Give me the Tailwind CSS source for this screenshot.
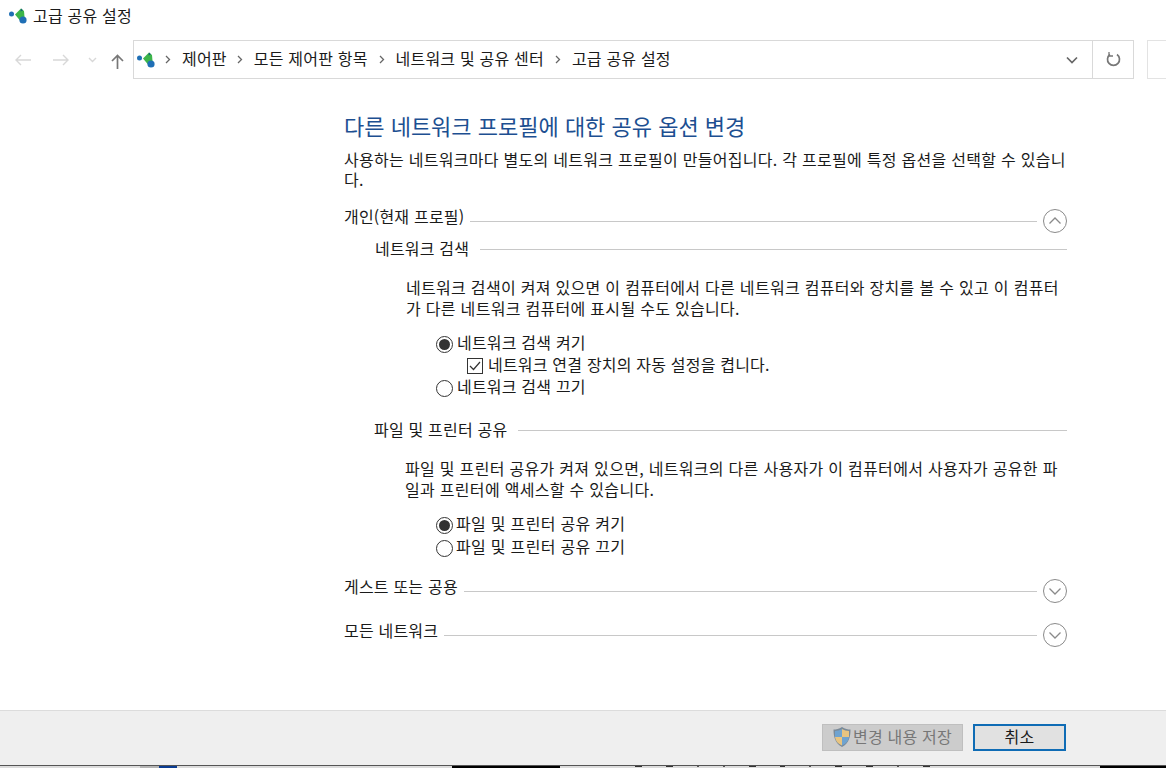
<!DOCTYPE html>
<html lang="ko">
<head>
<meta charset="utf-8" />
<title>고급 공유 설정</title>
<script src="https://cdn.jsdelivr.net/npm/@tailwindcss/browser@4"></script>
</head>
<body class="bg-white w-[1166px] h-[768px] overflow-hidden flex flex-col text-[16px] tracking-[0.2px] text-[#1a1a1a] font-['Noto_Sans_CJK_KR','Noto_Sans',sans-serif]">
  <!-- title bar -->
  <div class="h-[40px] shrink-0 flex items-center pl-[9px] pb-[8px] gap-[6px]">
    <svg width="18" height="16" viewBox="0 0 18 16"><circle cx="2.500" cy="6" r="2.500" fill="#1f6fb5"/><path d="M12 0.500 L15 3 L15.500 9 L11 12.500 L6 6.500 Z" fill="#3cb54a"/><path d="M12 0.500L14 2.200L11.500 3.500Z" fill="#14607a"/><circle cx="14" cy="12" r="3.600" fill="#1f6fb5"/></svg>
    <span class="pb-[2px]">고급 공유 설정</span>
  </div>
  <!-- nav bar -->
  <div class="h-[39px] shrink-0 flex items-stretch">
    <div class="w-[133px] flex items-center">
      <svg class="ml-[15px]" width="16" height="12" viewBox="0 0 16 12" fill="none" stroke="#d8d8d8" stroke-width="1.400"><path d="M16 6H1M6 1L1 6L6 11"/></svg>
      <svg class="ml-[22px]" width="16" height="12" viewBox="0 0 16 12" fill="none" stroke="#d8d8d8" stroke-width="1.400"><path d="M0 6H15M10 1L15 6L10 11"/></svg>
      <svg class="ml-[19px]" width="9" height="6" viewBox="0 0 9 6" fill="none" stroke="#d8d8d8" stroke-width="1.400"><path d="M1 1L4.500 4.500L8 1"/></svg>
      <svg class="ml-[14px] mt-[3px]" width="13" height="15" viewBox="0 0 13 15" fill="none" stroke="#777" stroke-width="1.700"><path d="M6.500 15V1.500M1 7L6.500 1.500L12 7"/></svg>
    </div>
    <div class="w-[1001px] border border-[#d9d9d9] flex items-center">
      <svg class="ml-[3px]" width="18" height="16" viewBox="0 0 18 16"><circle cx="2.500" cy="6" r="2.500" fill="#1f6fb5"/><path d="M12 0.500 L15 3 L15.500 9 L11 12.500 L6 6.500 Z" fill="#3cb54a"/><path d="M12 0.500L14 2.200L11.500 3.500Z" fill="#14607a"/><circle cx="14" cy="12" r="3.600" fill="#1f6fb5"/></svg>
      <svg class="ml-[10px]" width="6" height="9" viewBox="0 0 6 9" fill="none" stroke="#666" stroke-width="1.300"><path d="M1 1L4.500 4.500L1 8"/></svg>
      <span class="ml-[11px] pb-[4px]">제어판</span>
      <svg class="ml-[10px]" width="6" height="9" viewBox="0 0 6 9" fill="none" stroke="#666" stroke-width="1.300"><path d="M1 1L4.500 4.500L1 8"/></svg>
      <span class="ml-[11px] pb-[4px]">모든 제어판 항목</span>
      <svg class="ml-[11px]" width="6" height="9" viewBox="0 0 6 9" fill="none" stroke="#666" stroke-width="1.300"><path d="M1 1L4.500 4.500L1 8"/></svg>
      <span class="ml-[11px] pb-[4px]">네트워크 및 공유 센터</span>
      <svg class="ml-[11px]" width="6" height="9" viewBox="0 0 6 9" fill="none" stroke="#666" stroke-width="1.300"><path d="M1 1L4.500 4.500L1 8"/></svg>
      <span class="ml-[11px] pb-[4px]">고급 공유 설정</span>
      <svg class="ml-auto mr-[14px]" width="12" height="8" viewBox="0 0 12 8" fill="none" stroke="#666" stroke-width="1.700"><path d="M1 1.500L6 6.500L11 1.500"/></svg>
      <div class="w-[41px] h-full border-l border-[#d9d9d9] flex items-center justify-center pl-[1px]">
        <svg width="15" height="15" viewBox="0 0 15 15" fill="none" stroke="#777" stroke-width="1.700"><path d="M4 2.500A6 6 0 1 0 11 2.500"/><path d="M3 0V4H7" stroke-width="1.300"/></svg>
      </div>
    </div>
    <div class="ml-[13px] flex-1 border border-r-0 border-[#e3e3e3]"></div>
  </div>
  <!-- content -->
  <main class="flex-1 pl-[344px] w-[1067px]">
    <h1 class="mt-[33px] text-[22px] leading-[26px] tracking-normal text-[#1d4f91]">다른 네트워크 프로필에 대한 공유 옵션 변경</h1>
    <p class="mt-[11px] leading-[20px] tracking-[0.28px]">사용하는 네트워크마다 별도의 네트워크 프로필이 만들어집니다. 각 프로필에 특정 옵션을 선택할 수 있습니다.</p>
    <div class="mt-[17px] flex items-center h-[30px]">
      <span class="pb-[11px]">개인(현재 프로필)</span><div class="ml-[6px] flex-1 h-px bg-[#c8c8c8]"></div>
      <svg class="ml-[6px]" width="24" height="24" viewBox="0 0 24 24" fill="none" stroke="#8a8a8a"><circle cx="12" cy="12" r="11.500"/><path d="M6.500 14.500L12 9L17.500 14.500" stroke-width="1.300"/></svg>
    </div>
    <div class="ml-[31px]">
      <div class="flex items-center h-[24px] mt-[1px]"><span class="pb-[2px]">네트워크 검색</span><div class="ml-[11px] flex-1 h-px bg-[#c8c8c8]"></div></div>
      <p class="ml-[31px] mt-[16px] leading-[21px] tracking-[0.3px]">네트워크 검색이 켜져 있으면 이 컴퓨터에서 다른 네트워크 컴퓨터와 장치를 볼 수 있고 이 컴퓨터가 다른 네트워크 컴퓨터에 표시될 수도 있습니다.</p>
      <div class="ml-[61px] mt-[13px] flex flex-col">
        <label class="flex items-center h-[22px] gap-[4px]">
          <span class="w-[17px] h-[17px] rounded-full border border-[#333] flex items-center justify-center mt-[2px]"><span class="w-[11px] h-[11px] rounded-full bg-[#333]"></span></span><span class="pb-[3px]">네트워크 검색 켜기</span>
        </label>
        <label class="flex items-center h-[22px] ml-[31px] gap-[5px]">
          <span class="w-[16px] h-[16px] border border-[#333] flex items-center justify-center mt-[1px]"><svg width="12" height="10" viewBox="0 0 12 10" fill="none" stroke="#333" stroke-width="1.200"><path d="M1 5L4.500 8.500L11 1"/></svg></span><span class="pb-[2px]">네트워크 연결 장치의 자동 설정을 켭니다.</span>
        </label>
        <label class="flex items-center h-[22px] gap-[4px]">
          <span class="w-[17px] h-[17px] rounded-full border border-[#333] mt-[2px]"></span><span class="pb-[3px]">네트워크 검색 끄기</span>
        </label>
      </div>
      <div class="flex items-center h-[24px] mt-[20px] -ml-px"><span class="pb-[2px]">파일 및 프린터 공유</span><div class="ml-[11px] flex-1 h-px bg-[#c8c8c8]"></div></div>
      <p class="ml-[30px] mt-[16px] leading-[21px] tracking-[0.3px]">파일 및 프린터 공유가 켜져 있으면, 네트워크의 다른 사용자가 이 컴퓨터에서 사용자가 공유한 파일과 프린터에 액세스할 수 있습니다.</p>
      <div class="ml-[61px] mt-[13px] flex flex-col gap-px tracking-[0.3px]">
        <label class="flex items-center h-[22px] gap-[3px]">
          <span class="w-[17px] h-[17px] rounded-full border border-[#333] flex items-center justify-center mt-[2px]"><span class="w-[11px] h-[11px] rounded-full bg-[#333]"></span></span><span class="pb-[2px]">파일 및 프린터 공유 켜기</span>
        </label>
        <label class="flex items-center h-[22px] gap-[3px]">
          <span class="w-[17px] h-[17px] rounded-full border border-[#333] mt-[2px]"></span><span class="pb-[2px]">파일 및 프린터 공유 끄기</span>
        </label>
      </div>
    </div>
    <div class="mt-[18px] flex items-center h-[30px]">
      <span class="pb-[11px]">게스트 또는 공용</span><div class="ml-[6px] flex-1 h-px bg-[#c8c8c8]"></div>
      <svg class="ml-[6px]" width="24" height="24" viewBox="0 0 24 24" fill="none" stroke="#8a8a8a"><circle cx="12" cy="12" r="11.500"/><path d="M6.500 9.500L12 15L17.500 9.500" stroke-width="1.300"/></svg>
    </div>
    <div class="mt-[14px] flex items-center h-[30px]">
      <span class="pb-[11px]">모든 네트워크</span><div class="ml-[6px] flex-1 h-px bg-[#c8c8c8]"></div>
      <svg class="ml-[6px]" width="24" height="24" viewBox="0 0 24 24" fill="none" stroke="#8a8a8a"><circle cx="12" cy="12" r="11.500"/><path d="M6.500 9.500L12 15L17.500 9.500" stroke-width="1.300"/></svg>
    </div>
  </main>
  <!-- footer -->
  <footer class="h-[55px] shrink-0 bg-[#efefef] border-t border-[#dcdcdc] flex items-center justify-end pr-[100px] gap-[10px] pb-[2px]">
    <div class="w-[141px] h-[27px] bg-[#cccccc] border border-[#bfbfbf] flex items-center text-[#777] pl-[9px]">
      <svg class="shrink-0 mr-px" width="20" height="22" viewBox="0 0 20 22"><path d="M10 1C7 3 4 3.500 1.500 3.500C1.500 11 3 17 10 21C17 17 18.500 11 18.500 3.500C16 3.500 13 3 10 1Z" fill="#7a8a99"/><path d="M10 3V11H3C3 8 3 6 3 5C5.500 5 8 4 10 3Z" fill="#6fa3d0"/><path d="M10 11H17C16.500 15 14 18 10 19.500Z" fill="#6fa3d0"/><path d="M10 3C12 4 14.500 5 17 5V11H10Z" fill="#e8c480"/><path d="M3 11H10V19.500C6 18 3.500 15 3 11Z" fill="#e8c480"/></svg>
      <span class="whitespace-nowrap pb-[2px]">변경 내용 저장</span>
    </div>
    <div class="w-[93px] h-[27px] bg-[#e1e1e1] border-2 border-[#0f6cb5] flex items-center justify-center"><span class="pb-[2px]">취소</span></div>
  </footer>
  <!-- sliver of the window behind -->
  <div class="h-[3px] shrink-0 border-t border-[#555] bg-[#dcdcdc] flex">
    <div class="ml-[140px] w-[19px] bg-[#b5b5b5]"></div>
    <div class="w-[18px] bg-[#0b3c91]"></div>
    <div class="ml-[275px] w-[108px] bg-black"></div>
    <div class="ml-[75px] flex-1 flex items-start gap-[24px]">
      <div class="w-[7px] h-px bg-[#333]"></div><div class="w-[7px] h-px bg-[#333]"></div><div class="w-[2px] h-px bg-[#555]"></div><div class="w-[2px] h-px bg-[#555]"></div><div class="w-[7px] h-px bg-[#333]"></div><div class="w-[5px] h-px bg-[#333]"></div><div class="w-[2px] h-px bg-[#555]"></div><div class="w-[7px] h-px bg-[#333]"></div><div class="w-[7px] h-px bg-[#333]"></div><div class="w-[2px] h-px bg-[#555]"></div><div class="w-[7px] h-px bg-[#333]"></div>
    </div>
    <div class="w-[66px] bg-black"></div>
  </div>
</body>
</html>
